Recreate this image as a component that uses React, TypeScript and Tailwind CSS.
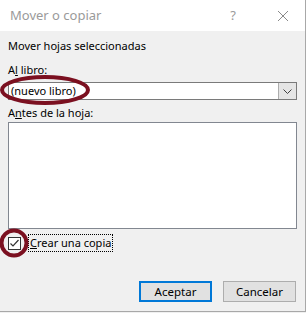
import React from "react";

export default function App() {
  const font = { fontFamily: '"Noto Sans", "Open Sans", sans-serif' };
  return (
    <div
      className="relative w-[306px] h-[313px] bg-[#f0f0f0] text-[11px] text-black overflow-hidden"
      style={font}
    >
      <div className="w-[306px] h-[312px] flex flex-col border-r border-b border-[#a8a8a8]">
        {/* Title bar */}
        <div className="h-[31px] bg-white flex items-center pl-[10px] text-[#9a9a9a] text-[13px]">
          <span className="flex-1">Mover o copiar</span>
          <span className="w-[12px] text-center mr-[38px] text-[13px]">?</span>
          <svg width="12" height="12" viewBox="0 0 12 12" className="mr-[16px]">
            <path d="M1 1 L11 11 M11 1 L1 11" stroke="#8a8a8a" strokeWidth="1" fill="none" />
          </svg>
        </div>
        {/* Body */}
        <div className="flex-1 flex flex-col pl-[8px] pr-[8px] pt-[7px] leading-[16px]">
          <div>Mover hojas seleccionadas</div>
          <div className="mt-[8px]">
            A<span className="underline">l</span> libro:
          </div>
          <div className="mt-[4px] h-[18px] flex border border-[#7a7a7a] bg-white">
            <div className="flex-1 flex items-center pl-[2px] leading-[14px]">(nuevo libro)</div>
            <div className="w-[18px] bg-[#e5e5e5] border-l border-[#adadad] flex items-center justify-center">
              <svg width="9" height="5" viewBox="0 0 9 5">
                <path d="M0.5 0.5 L4.5 4.5 L8.5 0.5" stroke="#404040" strokeWidth="1" fill="none" />
              </svg>
            </div>
          </div>
          <div className="mt-[5px]">
            A<span className="underline">n</span>tes de la hoja:
          </div>
          <div className="mt-[1px] h-[107px] border border-[#828790] bg-white" />
          <div className="mt-[5px] h-[18px] flex items-center">
            <div className="w-[13px] h-[13px] border border-[#333] bg-white flex items-center justify-center">
              <svg width="11" height="11" viewBox="0 0 11 11">
                <path d="M1.5 5.5 L4 8 L9.5 2" stroke="#333" strokeWidth="1.2" fill="none" />
              </svg>
            </div>
            <div className="ml-[7px] h-[18px] flex items-center px-[1px] border border-dotted border-black">
              <span className="underline">C</span>rear una copia
            </div>
          </div>
          <div className="flex-1" />
          <div className="flex justify-end gap-[11px] mb-[9px] pr-[1px]">
            <button className="w-[73px] h-[21px] border-2 border-[#0078d7] bg-[#e1e1e1] text-[11.5px] leading-[16px]">
              Aceptar
            </button>
            <button className="w-[73px] h-[21px] border border-[#adadad] bg-[#e1e1e1] text-[11.5px] leading-[16px]">
              Cancelar
            </button>
          </div>
        </div>
      </div>
      {/* Annotations */}
      <svg className="absolute left-0 top-0" width="306" height="313" viewBox="0 0 306 313">
        <ellipse cx="45" cy="90" rx="43" ry="13" stroke="#7b1020" strokeWidth="4" fill="none" />
        <circle cx="14" cy="243" r="12.5" stroke="#7b1020" strokeWidth="4" fill="none" />
      </svg>
    </div>
  );
}
